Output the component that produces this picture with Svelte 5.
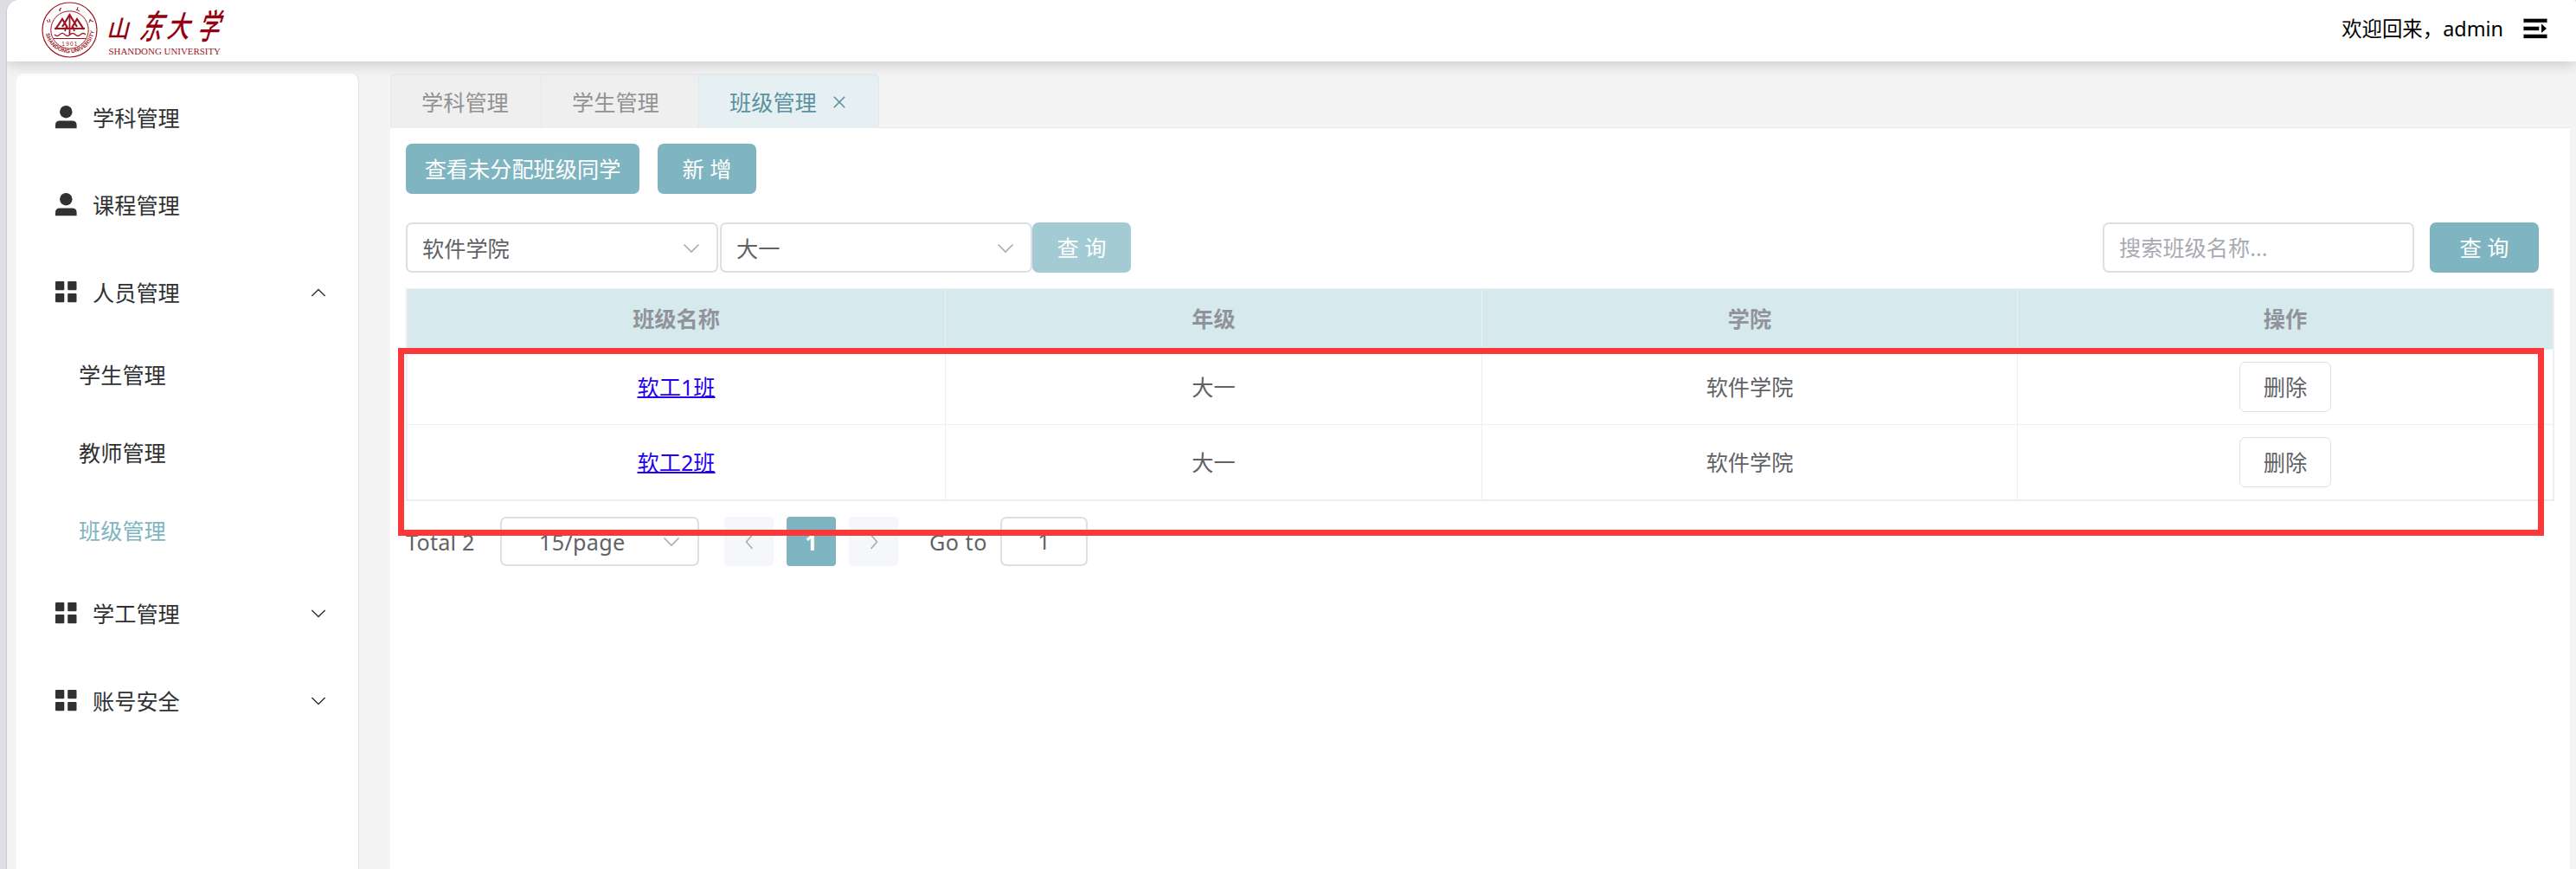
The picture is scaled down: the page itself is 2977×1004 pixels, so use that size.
<script>
  const tabs = [
    { label: '学科管理', cls: 'first' },
    { label: '学生管理', cls: 'second' },
    { label: '班级管理', cls: 'active' }
  ];
  const menu = [
    { icon: 'user', label: '学科管理' },
    { icon: 'user', label: '课程管理' },
    {
      icon: 'grid', label: '人员管理', arrow: 'up',
      children: ['学生管理', '教师管理', '班级管理']
    },
    { icon: 'grid', label: '学工管理', arrow: 'down' },
    { icon: 'grid', label: '账号安全', arrow: 'down' }
  ];
  const current = '班级管理';
  const columns = ['班级名称', '年级', '学院', '操作'];
  const rows = [
    { name: '软工1班', grade: '大一', college: '软件学院' },
    { name: '软工2班', grade: '大一', college: '软件学院' }
  ];
</script>

{#snippet chevron(dir)}
  <svg class="chev {dir}" viewBox="0 0 20 12" width="20" height="12">
    <path d="M1.5 1.5 L10 10 L18.5 1.5" />
  </svg>
{/snippet}

<div class="page">
  <div class="app">
    <header>
      <svg class="logo" viewBox="0 0 220 71" width="220" height="71">
        <g fill="none" stroke="#9b1622">
          <circle cx="40.5" cy="34.5" r="31.5" stroke-width="1.2" />
          <circle cx="40.5" cy="34.5" r="21.7" stroke-width="1" />
          <path d="M24 34 L32 22 L38 32 M32 31 L40.5 17 L49 31 M43 32 L49 22 L57 34" stroke-width="2.2" />
          <path d="M23 33 H58 M40.5 18 V40 M37 30 L35 36 M44 30 L46 36" stroke-width="1.8" />
          <path d="M23 40 q3 3 6 0 t6 0 t6 0 t6 0 t6 0 t6 0" stroke-width="1.2" />
          <path d="M22 44.5 H59" stroke-width="1.2" />
          <path d="M28 12 l3 -3 M29 13 l1 -4 M48 11 l4 2 M50 8 l-1 4 M14 23 l2 3 M17 22 l1 4 M63 23 l5 2 M65 22 l-2 4" stroke-width="1" />
          <path id="ring" d="M12.4 37 A28.4 28.4 0 0 0 68.6 37" stroke="none" />
        </g>
        <text class="year" x="41" y="52.5" text-anchor="middle">1901</text>
        <text class="ringtext"><textPath href="#ring" startOffset="2" textLength="80">SHANDONG UNIVERSITY</textPath></text>
        <g class="brush">
          <text transform="translate(83 43) skewX(-14) scale(.95 1)" font-size="27">山</text>
          <text transform="translate(120 44.5) skewX(-20) scale(.66 1)" font-size="39">东</text>
          <text transform="translate(152 43) skewX(-16) scale(.78 1)" font-size="34">大</text>
          <text transform="translate(187 45) skewX(-18) scale(.62 1)" font-size="40">学</text>
        </g>
        <text class="latin" x="85.5" y="63" textLength="129.5" lengthAdjust="spacingAndGlyphs">SHANDONG UNIVERSITY</text>
      </svg>
      <div class="user">
        <span>欢迎回来，<span class="admin">admin</span></span>
        <svg viewBox="0 0 28 24" width="28" height="24">
          <path d="M0 0 H28 V5.4 H0Z M0 9.2 H18.8 V14.6 H0Z M0 18.2 H28 V23.6 H0Z" fill="#aaa" />
          <path d="M.7 1 H27.3 V4.8 H.7Z M.7 10 H18 V13.9 H.7Z M.7 19 H27.3 V23 H.7Z M21 6.5 L27 12 L21 17Z" fill="#000" />
        </svg>
      </div>
    </header>

    <div class="body">
      <nav>
        {#each menu as m}
          <div class="item">
            {#if m.icon === 'user'}
              <svg viewBox="0 0 25 27" width="25" height="27">
                <circle cx="12.3" cy="7.2" r="7.2" />
                <path d="M0 26.3 V22.5 Q0 17.4 5.2 17.4 H19.4 Q24.6 17.4 24.6 22.5 V26.3Z" />
              </svg>
            {:else}
              <svg class="grid" viewBox="0 0 25 27" width="25" height="27">
                <rect x="0" y="1" width="10.3" height="10.3" rx="1" />
                <rect x="14.2" y="1" width="10.3" height="10.3" rx="1" />
                <rect x="0" y="15" width="10.3" height="10.3" rx="1" />
                <rect x="14.2" y="15" width="10.3" height="10.3" rx="1" />
              </svg>
            {/if}
            <span>{m.label}</span>
            {#if m.arrow}{@render chevron(m.arrow)}{/if}
          </div>
          {#each m.children ?? [] as c}
            <div class="sub" class:on={c === current}>{c}</div>
          {/each}
        {/each}
      </nav>

      <main>
        <div class="tabs">
          {#each tabs as t}
            <div class="tab {t.cls}">
              <span>{t.label}</span>
              {#if t.cls === 'active'}
                <svg viewBox="0 0 14 14" width="14" height="14"><path d="M.8 .8 L13.2 13.2 M13.2 .8 L.8 13.2" /></svg>
              {/if}
            </div>
          {/each}
        </div>

        <section>
          <div class="actions">
            <button class="btn wide">查看未分配班级同学</button>
            <button class="btn">新 增</button>
          </div>

          <div class="filters">
            <div class="select">软件学院{@render chevron('down')}</div>
            <div class="select two">大一{@render chevron('down')}</div>
            <button class="btn pale">查 询</button>
            <div class="search">搜索班级名称...</div>
            <button class="btn query">查 询</button>
          </div>

          <div class="tablewrap">
            <div class="table">
              {#each columns as c}<div class="th">{c}</div>{/each}
              {#each rows as r}
                <div class="td"><a href="#class">{r.name}</a></div>
                <div class="td">{r.grade}</div>
                <div class="td">{r.college}</div>
                <div class="td"><button class="del">删除</button></div>
              {/each}
            </div>
            <div class="mark"></div>
          </div>

          <div class="pager">
            <span class="total">Total 2</span>
            <div class="size"><span>15/page</span>{@render chevron('down')}</div>
            <div class="pg"><svg viewBox="0 0 10 18" width="10" height="18"><path d="M8.5 1 L1.5 9 L8.5 17" /></svg></div>
            <div class="pg cur">1</div>
            <div class="pg"><svg viewBox="0 0 10 18" width="10" height="18"><path d="M1.5 1 L8.5 9 L1.5 17" /></svg></div>
            <span class="goto">Go to</span>
            <div class="num">1</div>
          </div>
        </section>
      </main>
    </div>
  </div>
</div>

<style>
  :global(body) { margin: 0; background: #dedfe3; overflow: hidden; }
  * { box-sizing: border-box; }
  .page {
    width: 2977px; height: 1004px; padding-left: 8px; overflow: hidden;
    font-family: "Noto Sans", "Noto Sans CJK SC", sans-serif; font-size: 25.2px; line-height: 36px;
    color: #606266;
  }
  button { font: inherit; margin: 0; padding: 0; }
  .app {
    height: 1004px; background: #f4f4f4; border-radius: 14px 4px 0 0; overflow: hidden;
    box-shadow: -1px 0 1px #c9cace;
  }
  header {
    position: relative; height: 71px; background: #fff; display: flex; justify-content: space-between;
    align-items: flex-start; padding: 0 33px 0 32px; box-shadow: 0 3px 16px rgba(0, 0, 0, .19);
  }
  .logo { display: block; overflow: visible; }
  .year { font: 6.5px "Liberation Sans", sans-serif; letter-spacing: 1.2px; fill: #9b1622; }
  .ringtext { font: bold 6.4px "Liberation Sans", sans-serif; fill: #9b1622; }
  .brush { font-family: "Noto Sans CJK SC", sans-serif; font-weight: 500; fill: #93000f; }
  .latin { font: 10.5px "Liberation Serif", serif; fill: #9b1622; }
  .user { display: flex; align-items: center; height: 65px; font-size: 23.4px; color: #000; }
  .user svg { margin-left: 23px; }

  .body { display: flex; padding: 14px 7px 0 11px; }
  nav {
    width: 396px; height: 930px; background: #fff; border-radius: 9px 9px 0 0;
    border-right: 1px solid #dcdfe6; color: #303133; flex: none;
  }
  .item { height: 101px; display: flex; align-items: center; padding: 0 37px 0 45px; }
  .item span { margin-left: 18px; flex: 1; }
  .item svg { fill: #303133; }
  .chev { fill: none; stroke: #a8abb2; stroke-width: 1.6; flex: none; }
  .item .chev { fill: none; stroke: #303133; width: 18px; }
  .up { transform: rotate(180deg); }
  .sub { height: 90px; line-height: 91px; padding-left: 72px; }
  .on { color: #7fb5c1; }

  main { margin-left: 36px; flex: 1; }
  .tabs { display: flex; height: 63px; border-bottom: 1px solid #e4e7ed; }
  .tab {
    height: 63px; display: flex; align-items: center; padding: 1px 0 0 35px; background: #efefef;
    color: #929292; border-top: 1px solid #e4e7ed; border-left: 1px solid #e4e7ed;
  }
  .first { width: 174px; border-radius: 7px 0 0 0; }
  .second { width: 182px; }
  .active { width: 209px; background: #e6eff2; color: #5b929e; border-right: 1px solid #e4e7ed; border-radius: 0 7px 0 0; }
  .tab svg { margin-left: 19px; fill: none; stroke: #5b929e; stroke-width: 1.6; }

  section { background: #fff; height: 856px; padding: 18px 18px 0; }
  .actions { display: flex; gap: 21px; }
  .btn {
    width: 114px; height: 58px; border: 0; border-radius: 7px; background: #7fb5c1; color: #fff; white-space: nowrap;
  }
  .wide { width: 270px; }
  .filters { display: flex; margin-top: 33px; }
  .select, .search, .size, .num { border: 2px solid #dcdfe6; border-radius: 7px; background: #fff; }
  .select {
    width: 361px; height: 58px; padding: 1px 19px 0 17px; display: flex; align-items: center; justify-content: space-between;
  }
  .two { margin: 0 0 0 2px; }
  .pale { background: #a2cbd3; }
  .search { width: 360px; height: 58px; margin-left: auto; padding: 0 17px; line-height: 55px; color: #a8abb2; }
  .query { width: 126px; margin: 0 18px; }

  .tablewrap { position: relative; margin-top: 18px; }
  .table {
    display: grid; grid-template-columns: 622px 620px 619px 1fr; grid-template-rows: 70px 87px 87px;
    border: 2px solid #ebeef5; border-top-width: 1px; height: 246px; text-align: center;
  }
  .th { background: #d6e9ec; color: #909399; font-weight: 700; line-height: 68px; border-right: 1px solid #ebeef5; border-bottom: 1px solid #ebeef5; }
  .td { display: flex; align-items: center; justify-content: center; border-right: 1px solid #ebeef5; border-bottom: 1px solid #ebeef5; }
  .th:nth-child(4n), .td:nth-child(4n) { border-right: 0; }
  a { color: #2400f0; text-decoration-thickness: 2px; }
  .del { width: 106px; height: 58px; border: 1px solid #dcdfe6; border-radius: 7px; background: #fff; color: #606266; }
  /* highlight frame laid over the data rows */
  .mark { position: absolute; left: -9px; top: 69px; width: 2480px; height: 217px; border: 7px solid #fb3838; }

  .pager { display: flex; align-items: center; height: 57px; margin-top: 18px; }
  .total { width: 109px; letter-spacing: .2px; }
  .size { width: 230px; height: 57px; display: flex; align-items: center; justify-content: space-between; padding: 0 20px 0 43px; margin-right: 29px; letter-spacing: .3px; }
  .pg { width: 57px; height: 57px; border-radius: 4px; background: #f5f7fa; margin-right: 15px; display: flex; align-items: center; justify-content: center; }
  .pg svg { fill: none; stroke: #a8abb2; stroke-width: 1.6; }
  .cur { background: #7fb5c1; color: #fff; font-weight: 700; }
  .goto { margin-left: 21px; width: 82px; letter-spacing: .5px; }
  .num { width: 101px; height: 57px; line-height: 52px; text-align: center; }
</style>
